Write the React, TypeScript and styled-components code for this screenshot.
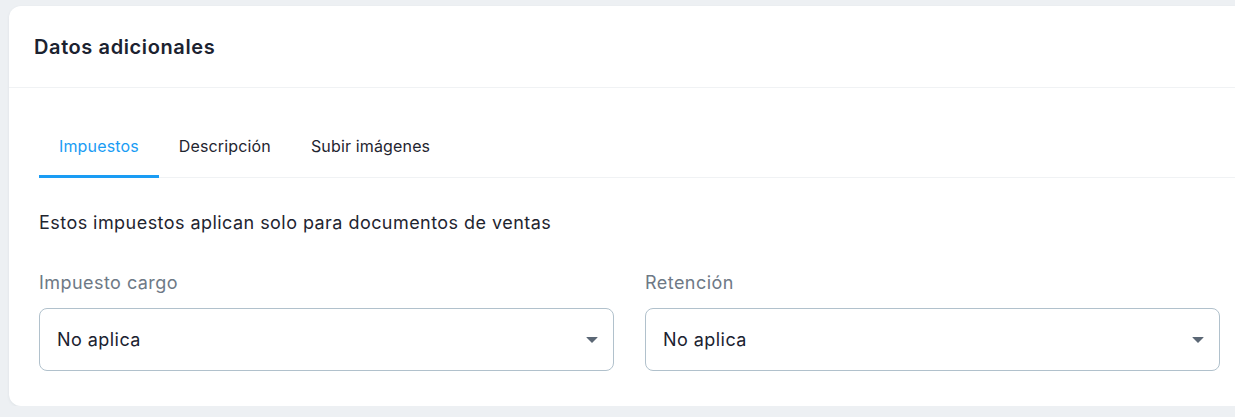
import React, { useState } from 'react'
import styled, { createGlobalStyle } from 'styled-components'

const GlobalStyle = createGlobalStyle`
  html, body {
    margin: 0;
    background: #edf0f3;
    font-family: Inter, "Noto Sans", sans-serif;
    overflow: hidden;
  }
  body {
    padding: 6px 0 0 9px;
  }
`

const Card = styled.section`
  width: 1241px;
  height: 400px;
  box-sizing: border-box;
  background: #ffffff;
  border-radius: 12px;
  box-shadow: 0 1px 3px rgba(40, 60, 80, 0.08);
  overflow: hidden;
`

const Header = styled.header`
  height: 81px;
  display: flex;
  align-items: center;
  padding: 0 25px;
  border-bottom: 1px solid #f0f2f4;
`

const Title = styled.h2`
  margin: 0;
  font-size: 20px;
  font-weight: 600;
  letter-spacing: 0.6px;
  color: #1b2230;
`

const Body = styled.div`
  padding: 36px 0 0 30px;
`

const TabList = styled.nav`
  display: flex;
  border-bottom: 1px solid #f0f2f4;
`

const Tab = styled.button<{ $active?: boolean }>`
  font-family: inherit;
  font-size: 16px;
  line-height: 20px;
  letter-spacing: 0.15px;
  padding: 12px 20px 19px;
  margin-bottom: -1px;
  background: none;
  border: none;
  border-bottom: 3px solid ${p => (p.$active ? '#1a9cf4' : 'transparent')};
  color: ${p => (p.$active ? '#1a9cf4' : '#1f2530')};
  cursor: pointer;
`

const Note = styled.p`
  margin: 33px 0 0;
  font-size: 18px;
  line-height: 24px;
  letter-spacing: 0.45px;
  color: #1f2530;
`

const Fields = styled.div`
  display: grid;
  grid-template-columns: 575px 575px;
  column-gap: 31px;
  margin-top: 36px;
`

const Field = styled.label`
  display: flex;
  flex-direction: column;
  gap: 13px;
`

const Label = styled.span`
  font-size: 18px;
  line-height: 24px;
  letter-spacing: 0.45px;
  color: #6e7986;
`

const Select = styled.div`
  height: 63px;
  box-sizing: border-box;
  display: flex;
  align-items: center;
  justify-content: space-between;
  padding: 0 15px 0 17px;
  border: 1px solid #b1c1cc;
  border-radius: 8px;
  font-size: 18px;
  letter-spacing: 0.45px;
  color: #1b2230;
`

const Caret = styled.span`
  width: 0;
  height: 0;
  border-left: 6.5px solid transparent;
  border-right: 6.5px solid transparent;
  border-top: 6px solid #5b6775;
  border-radius: 1px;
`

const tabs = ['Impuestos', 'Descripción', 'Subir imágenes']

export default function App() {
  const [active, setActive] = useState(0)
  return (
    <>
      <GlobalStyle />
      <Card>
        <Header>
          <Title>Datos adicionales</Title>
        </Header>
        <Body>
          <TabList>
            {tabs.map((t, i) => (
              <Tab key={t} $active={i === active} onClick={() => setActive(i)}>
                {t}
              </Tab>
            ))}
          </TabList>
          <Note>Estos impuestos aplican solo para documentos de ventas</Note>
          <Fields>
            <Field>
              <Label>Impuesto cargo</Label>
              <Select>
                No aplica
                <Caret />
              </Select>
            </Field>
            <Field>
              <Label>Retención</Label>
              <Select>
                No aplica
                <Caret />
              </Select>
            </Field>
          </Fields>
        </Body>
      </Card>
    </>
  )
}
